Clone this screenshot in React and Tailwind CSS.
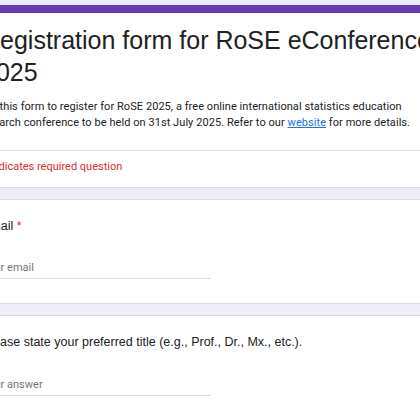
export default function App() {
  const sans = { fontFamily: '"Liberation Sans", Arial, sans-serif' };
  const roboto = { fontFamily: 'Roboto, "Noto Sans", sans-serif' };
  return (
    <div className="w-[420px] h-[420px] overflow-hidden bg-[#f0ebf8]">
      <div className="ml-[-43px] w-[508px] pt-[5px] flex flex-col gap-[11px]">
        <div className="rounded-lg border border-[#dadce0] border-t-0 bg-white overflow-hidden">
          <div className="h-[8px] bg-[#673ab7]" />
          <div className="px-6 pt-[11px] pb-[19px]">
            <div className="text-[25px] leading-[32px] text-[#202124] whitespace-nowrap" style={sans}>
              Registration form for RoSE eConference
              <br />
              2025
            </div>
            <div className="mt-[11px] ml-[-4px] text-[11px] leading-[16px] tracking-[0.06px] text-[#202124] whitespace-nowrap" style={roboto}>
              Use this form to register for RoSE 2025, a free online international statistics education
              <br />
              research conference to be held on 31st July 2025. Refer to our{" "}
              <span className="text-[#1a73e8] underline">website</span> for more details.
            </div>
          </div>
          <div className="h-px bg-[#dadce0]" />
          <div className="px-6 pt-[8px] pb-[12px] text-[11px] leading-[16px] text-[#d93025]" style={roboto}>
            * Indicates required question
          </div>
        </div>

        <div className="rounded-lg border border-[#dadce0] bg-white px-6 pt-[16px] pb-[24px]">
          <div className="text-[12.5px] leading-[20px] text-[#202124]" style={sans}>
            Email <span className="text-[#d93025]">*</span>
          </div>
          <div className="mt-[24px] w-[229px] border-b border-[#dadce0] pb-[2px] text-[11px] leading-[16px] text-[#70757a]" style={roboto}>
            Your email
          </div>
        </div>

        <div className="rounded-lg border border-[#dadce0] bg-white px-6 pt-[16px] pb-[24px]">
          <div className="text-[12.5px] leading-[20px] text-[#202124]" style={sans}>
            Please state your preferred title (e.g., Prof., Dr., Mx., etc.).
          </div>
          <div className="mt-[25px] w-[229px] border-b border-[#dadce0] pb-[2px] text-[11px] leading-[16px] text-[#70757a]" style={roboto}>
            Your answer
          </div>
        </div>
      </div>
    </div>
  );
}
